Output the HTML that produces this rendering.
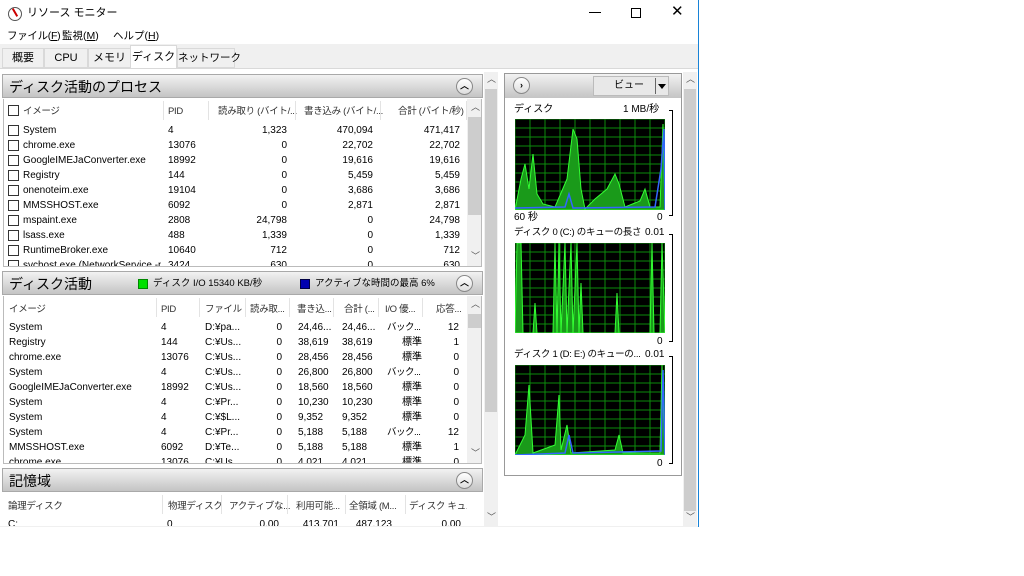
<!DOCTYPE html>
<html><head><meta charset="utf-8"><style>
*{margin:0;padding:0;box-sizing:border-box}
body{width:1024px;height:576px;background:#fff;position:relative;overflow:hidden;font-family:"Liberation Sans","Noto Sans CJK JP",sans-serif;font-size:10px;line-height:12px;color:#000}
.a{position:absolute;white-space:nowrap}
.win{position:absolute;left:0;top:0;width:699px;height:527px;border-right:1px solid #1883d7;border-bottom:1px solid #1883d7;background:#fff}
.hdr{position:absolute;height:24px;background:linear-gradient(#f2f2f2,#d6d6d6 60%,#c4c4c4);border:1px solid #a9a9a9}
.hdr .t{position:absolute;left:6px;top:4px;font-size:14px;line-height:16px;white-space:nowrap}
.col{position:absolute;width:17px;height:17px;border-radius:50%;border:1px solid #888;background:linear-gradient(#fff,#ddd);top:3px;font-size:9px;text-align:center;line-height:15px;font-weight:bold}
.tbl{position:absolute;background:#fff}
.r{position:absolute;left:0;right:0;height:15px}
.r span{position:absolute;top:1px;white-space:nowrap;line-height:12px}
.hr span{color:#333;font-size:9.5px;letter-spacing:-0.3px}
.sep{position:absolute;top:0;width:1px;height:19px;background:#e3e3e3}
.cb{position:absolute;width:11px;height:11px;border:1px solid #333;background:#fff}
.vs{position:absolute;background:#f0f0f0}
.vs .th{position:absolute;background:#cdcdcd}
.arr{position:absolute;font-size:9px;line-height:10px;color:#555}
.tab{position:absolute;top:48px;height:20px;border:1px solid #d9d9d9;background:#f0f0f0;font-size:11px;line-height:14px;padding:2px 0;text-align:center;white-space:nowrap}
</style></head><body>
<div class="win">
<div class="a" style="left:8px;top:7px;width:14px;height:14px;border-radius:50%;border:1.5px solid #555;background:#fff"></div>
<div class="a" style="left:14px;top:8px;width:2px;height:9px;background:#c00;transform:rotate(-30deg)"></div>
<div class="a" style="left:27px;top:7px;font-size:11px;line-height:13px">リソース モニター</div>
<div class="a" style="left:589px;top:12px;width:12px;height:1px;background:#000"></div>
<div class="a" style="left:631px;top:8px;width:10px;height:10px;border:1px solid #000"></div>
<div class="a" style="left:671px;top:4px;font-size:15px;line-height:16px">✕</div>
<div class="a" style="left:7px;top:30px;font-size:10.5px;line-height:13px;letter-spacing:-0.3px">ファイル(<u>F</u>)</div>
<div class="a" style="left:62px;top:30px;font-size:10.5px;line-height:13px">監視(<u>M</u>)</div>
<div class="a" style="left:113px;top:30px;font-size:10.5px;line-height:13px">ヘルプ(<u>H</u>)</div>
<div class="a" style="left:0;top:44px;width:698px;height:483px;background:#f0f0f0"></div>
<div class="tab" style="left:2px;width:42px">概要</div>
<div class="tab" style="left:44px;width:44px">CPU</div>
<div class="tab" style="left:88px;width:43px">メモリ</div>
<div class="tab" style="left:130px;top:45px;width:47px;height:24px;background:#fff;border-bottom:none;padding-top:4px">ディスク</div>
<div class="tab" style="left:177px;width:58px;font-size:10.5px">ネットワーク</div>
<div class="a" style="left:0;top:68px;width:698px;height:458px;background:#fff;border-top:1px solid #d9d9d9"></div>

<div class="hdr" style="left:2px;top:74px;width:481px"><span class="t">ディスク活動のプロセス</span><div class="col" style="left:453px">︿</div></div>
<div class="tbl" style="left:3px;top:99px;width:479px;height:168px;border:1px solid #bbb;border-top:none;overflow:hidden">
 <div class="r hr" style="top:2px;height:19px"><div class="cb" style="left:4px;top:4px"></div><span style="left:19px;top:5px">イメージ</span><div class="sep" style="left:159px"></div><span style="left:164px;top:5px">PID</span><div class="sep" style="left:204px"></div><span style="left:214px;top:5px">読み取り (バイト/...</span><div class="sep" style="left:291px"></div><span style="left:300px;top:5px">書き込み (バイト/...</span><div class="sep" style="left:376px"></div><span style="left:394px;top:5px">合計 (バイト/秒)</span><div class="sep" style="left:462px"></div></div>
 <div id="t1"></div>
 <div class="vs" style="left:463px;top:0;width:16px;height:168px"><div class="arr" style="left:4px;top:3px">︿</div><div class="th" style="left:1px;top:18px;width:14px;height:98px"></div><div class="arr" style="left:4px;top:152px">﹀</div></div>
</div>

<div class="hdr" style="left:2px;top:271px;width:481px"><span class="t">ディスク活動</span>
<div class="a" style="left:135px;top:7px;width:10px;height:10px;background:#00e000;border:1px solid #080"></div><div class="a" style="left:150px;top:6px;font-size:9.5px">ディスク I/O 15340 KB/秒</div>
<div class="a" style="left:297px;top:7px;width:10px;height:10px;background:#0000b0;border:1px solid #004"></div><div class="a" style="left:312px;top:6px;font-size:9.5px">アクティブな時間の最高 6%</div>
<div class="col" style="left:453px">︿</div></div>
<div class="tbl" style="left:3px;top:296px;width:479px;height:168px;border:1px solid #bbb;border-top:none;overflow:hidden">
 <div class="r hr" style="top:2px;height:19px"><span style="left:5px;top:6px">イメージ</span><div class="sep" style="left:152px"></div><span style="left:157px;top:6px">PID</span><div class="sep" style="left:195px"></div><span style="left:201px;top:6px">ファイル</span><div class="sep" style="left:241px"></div><span style="left:246px;top:6px">読み取...</span><div class="sep" style="left:285px"></div><span style="left:293px;top:6px">書き込...</span><div class="sep" style="left:329px"></div><span style="left:340px;top:6px">合計 (...</span><div class="sep" style="left:374px"></div><span style="left:381px;top:6px">I/O 優...</span><div class="sep" style="left:418px"></div><span style="left:432px;top:6px">応答...</span></div>
 <div id="t2"></div>
 <div class="vs" style="left:463px;top:0;width:16px;height:168px"><div class="arr" style="left:4px;top:3px">︿</div><div class="th" style="left:1px;top:18px;width:14px;height:14px"></div><div class="arr" style="left:4px;top:152px">﹀</div></div>
</div>

<div class="hdr" style="left:2px;top:468px;width:481px"><span class="t">記憶域</span><div class="col" style="left:453px">︿</div></div>
<div class="tbl" style="left:3px;top:493px;width:464px;height:33px;overflow:hidden">
 <div class="r hr" style="top:2px;height:19px"><span style="left:5px;top:6px">論理ディスク</span><div class="sep" style="left:159px"></div><span style="left:165px;top:6px">物理ディスク</span><div class="sep" style="left:218px"></div><span style="left:226px;top:6px">アクティブな...</span><div class="sep" style="left:284px"></div><span style="left:293px;top:6px">利用可能...</span><div class="sep" style="left:342px"></div><span style="left:346px;top:6px">全領域 (M...</span><div class="sep" style="left:402px"></div><span style="left:406px;top:6px">ディスク キュ...</span></div>
 <div class="r" style="top:25px"><span style="left:5px">C:</span><span style="left:164px">0</span><span style="right:188px">0.00</span><span style="right:128px">413,701</span><span style="right:75px">487,123</span><span style="right:6px">0.00</span></div>
</div>

<div class="vs" style="left:484px;top:72px;width:14px;height:454px"><div class="arr" style="left:3px;top:2px">︿</div><div class="th" style="left:1px;top:17px;width:12px;height:323px"></div><div class="arr" style="left:3px;top:440px">﹀</div></div>

<div class="a" style="left:504px;top:73px;width:178px;height:403px;border:1px solid #999;background:#fff"></div>
<div class="hdr" style="left:505px;top:74px;width:176px;height:24px;border:none"><div class="col" style="left:8px">›</div>
<div class="a" style="left:88px;top:2px;width:76px;height:20px;background:#e8e8e8;border:1px solid #bbb"><span style="position:absolute;left:20px;top:3px;font-size:10px">ビュー</span><div style="position:absolute;left:61px;top:1px;width:1px;height:16px;background:#666"></div><div style="position:absolute;left:64px;top:7px;border-left:4px solid transparent;border-right:4px solid transparent;border-top:5px solid #000"></div></div></div>
<div class="a" style="left:514px;top:104px">ディスク</div><div class="a" style="left:623px;top:104px">1 MB/秒</div>
<div class="a" style="left:514px;top:212px">60 秒</div><div class="a" style="left:657px;top:212px">0</div>
<div class="a" style="left:514px;top:227px;font-size:9.5px;letter-spacing:-0.3px">ディスク 0 (C:) のキューの長さ</div><div class="a" style="left:645px;top:227px">0.01</div>
<div class="a" style="left:657px;top:336px">0</div>
<div class="a" style="left:514px;top:349px;font-size:9.5px;letter-spacing:-0.3px">ディスク 1 (D: E:) のキューの...</div><div class="a" style="left:645px;top:349px">0.01</div>
<div class="a" style="left:657px;top:458px">0</div>
<div class="a" style="left:669px;top:110px;width:4px;height:106px;border:1px solid #000;border-left:none"></div>
<div class="a" style="left:669px;top:234px;width:4px;height:108px;border:1px solid #000;border-left:none"></div>
<div class="a" style="left:669px;top:356px;width:4px;height:108px;border:1px solid #000;border-left:none"></div>
<svg class="a" style="left:515px;top:119px" width="150" height="91" viewBox="0 0 150 91">
<rect width="150" height="91" fill="#000"/>
<path d="M0 91 L6 60 L10 45 L14 70 L18 35 L22 75 L28 85 L40 88 L52 60 L58 10 L62 20 L66 70 L70 90 L80 80 L92 70 L100 55 L104 65 L110 88 L125 82 L130 70 L135 88 L145 88 L148 5 L150 91Z" fill="#1a9a1a" stroke="#3f3" stroke-width="1"/>
<path d="M0 89 L50 88 L54 75 L58 89 L140 88 L146 50 L149 10 L150 91" fill="none" stroke="#36f" stroke-width="1.5"/>
</svg>
<svg class="a" style="left:515px;top:243px" width="150" height="90" viewBox="0 0 150 90">
<rect width="150" height="90" fill="#000"/>
<path d="M0 90 L2 0 L6 0 L8 90 L18 90 L20 60 L22 90 L38 90 L40 0 L42 90 L44 0 L46 90 L50 0 L52 90 L56 0 L58 90 L62 0 L64 90 L66 40 L68 90 L100 90 L102 50 L104 90 L135 90 L137 0 L139 90 L145 90 L147 0 L150 90Z" fill="#1a9a1a" stroke="#3f3"/>
</svg>
<svg class="a" style="left:515px;top:365px" width="150" height="90" viewBox="0 0 150 90">
<rect width="150" height="90" fill="#000"/>
<path d="M0 90 L10 70 L14 20 L18 88 L40 80 L44 30 L46 85 L52 60 L56 88 L100 85 L104 70 L108 88 L145 88 L147 0 L150 90Z" fill="#1a9a1a" stroke="#3f3"/>
<path d="M0 90 L50 88 L54 70 L58 88 L146 86 L148 5 L150 90" fill="none" stroke="#36f" stroke-width="1.5"/>
</svg>
<div class="vs" style="left:683px;top:72px;width:14px;height:454px"><div class="arr" style="left:3px;top:2px">︿</div><div class="th" style="left:1px;top:17px;width:12px;height:422px"></div><div class="arr" style="left:3px;top:440px">﹀</div></div>
</div>
<script>
var d1=[["System",4,"1,323","470,094","471,417"],["chrome.exe",13076,"0","22,702","22,702"],["GoogleIMEJaConverter.exe",18992,"0","19,616","19,616"],["Registry",144,"0","5,459","5,459"],["onenoteim.exe",19104,"0","3,686","3,686"],["MMSSHOST.exe",6092,"0","2,871","2,871"],["mspaint.exe",2808,"24,798","0","24,798"],["lsass.exe",488,"1,339","0","1,339"],["RuntimeBroker.exe",10640,"712","0","712"],["svchost.exe (NetworkService -p)",3424,"630","0","630"]];
var h="";d1.forEach(function(r,i){var t=25+i*15;h+='<div class="r" style="top:'+t+'px"><div class="cb" style="left:4px;top:1px"></div><span style="left:19px;max-width:138px;overflow:hidden">'+r[0]+'</span><span style="left:164px">'+r[1]+'</span><span style="right:194px">'+r[2]+'</span><span style="right:108px">'+r[3]+'</span><span style="right:21px">'+r[4]+'</span></div>'});
document.getElementById("t1").innerHTML=h;
var d2=[["System",4,"D:¥pa...","24,46...","24,46...","バック...",12],["Registry",144,"C:¥Us...","38,619","38,619","標準",1],["chrome.exe",13076,"C:¥Us...","28,456","28,456","標準",0],["System",4,"C:¥Us...","26,800","26,800","バック...",0],["GoogleIMEJaConverter.exe",18992,"C:¥Us...","18,560","18,560","標準",0],["System",4,"C:¥Pr...","10,230","10,230","標準",0],["System",4,"C:¥$L...","9,352","9,352","標準",0],["System",4,"C:¥Pr...","5,188","5,188","バック...",12],["MMSSHOST.exe",6092,"D:¥Te...","5,188","5,188","標準",1],["chrome.exe",13076,"C:¥Us...","4,021","4,021","標準",0]];
h="";d2.forEach(function(r,i){var t=25+i*15;var io=r[5]=="標準"?'<span style="left:398px">標準</span>':'<span style="left:383px;font-size:9.5px;letter-spacing:-0.5px">'+r[5]+'</span>';h+='<div class="r" style="top:'+t+'px"><span style="left:5px">'+r[0]+'</span><span style="left:157px">'+r[1]+'</span><span style="left:201px">'+r[2]+'</span><span style="right:199px">0</span><span style="left:294px">'+r[3]+'</span><span style="left:338px">'+r[4]+'</span>'+io+'<span style="right:22px">'+r[6]+'</span></div>'});
document.getElementById("t2").innerHTML=h;
var g="";for(var x=0;x<=150;x+=15)g+='<line x1="'+x+'" y1="0" x2="'+x+'" y2="91"/>';for(var y=0;y<=91;y+=9)g+='<line x1="0" y1="'+y+'" x2="150" y2="'+y+'"/>';
document.querySelectorAll("svg").forEach(function(s){var e=document.createElementNS("http://www.w3.org/2000/svg","g");e.setAttribute("stroke","#0c8a0c");e.innerHTML=g;s.insertBefore(e,s.children[1]);});
</script>
</body></html>
